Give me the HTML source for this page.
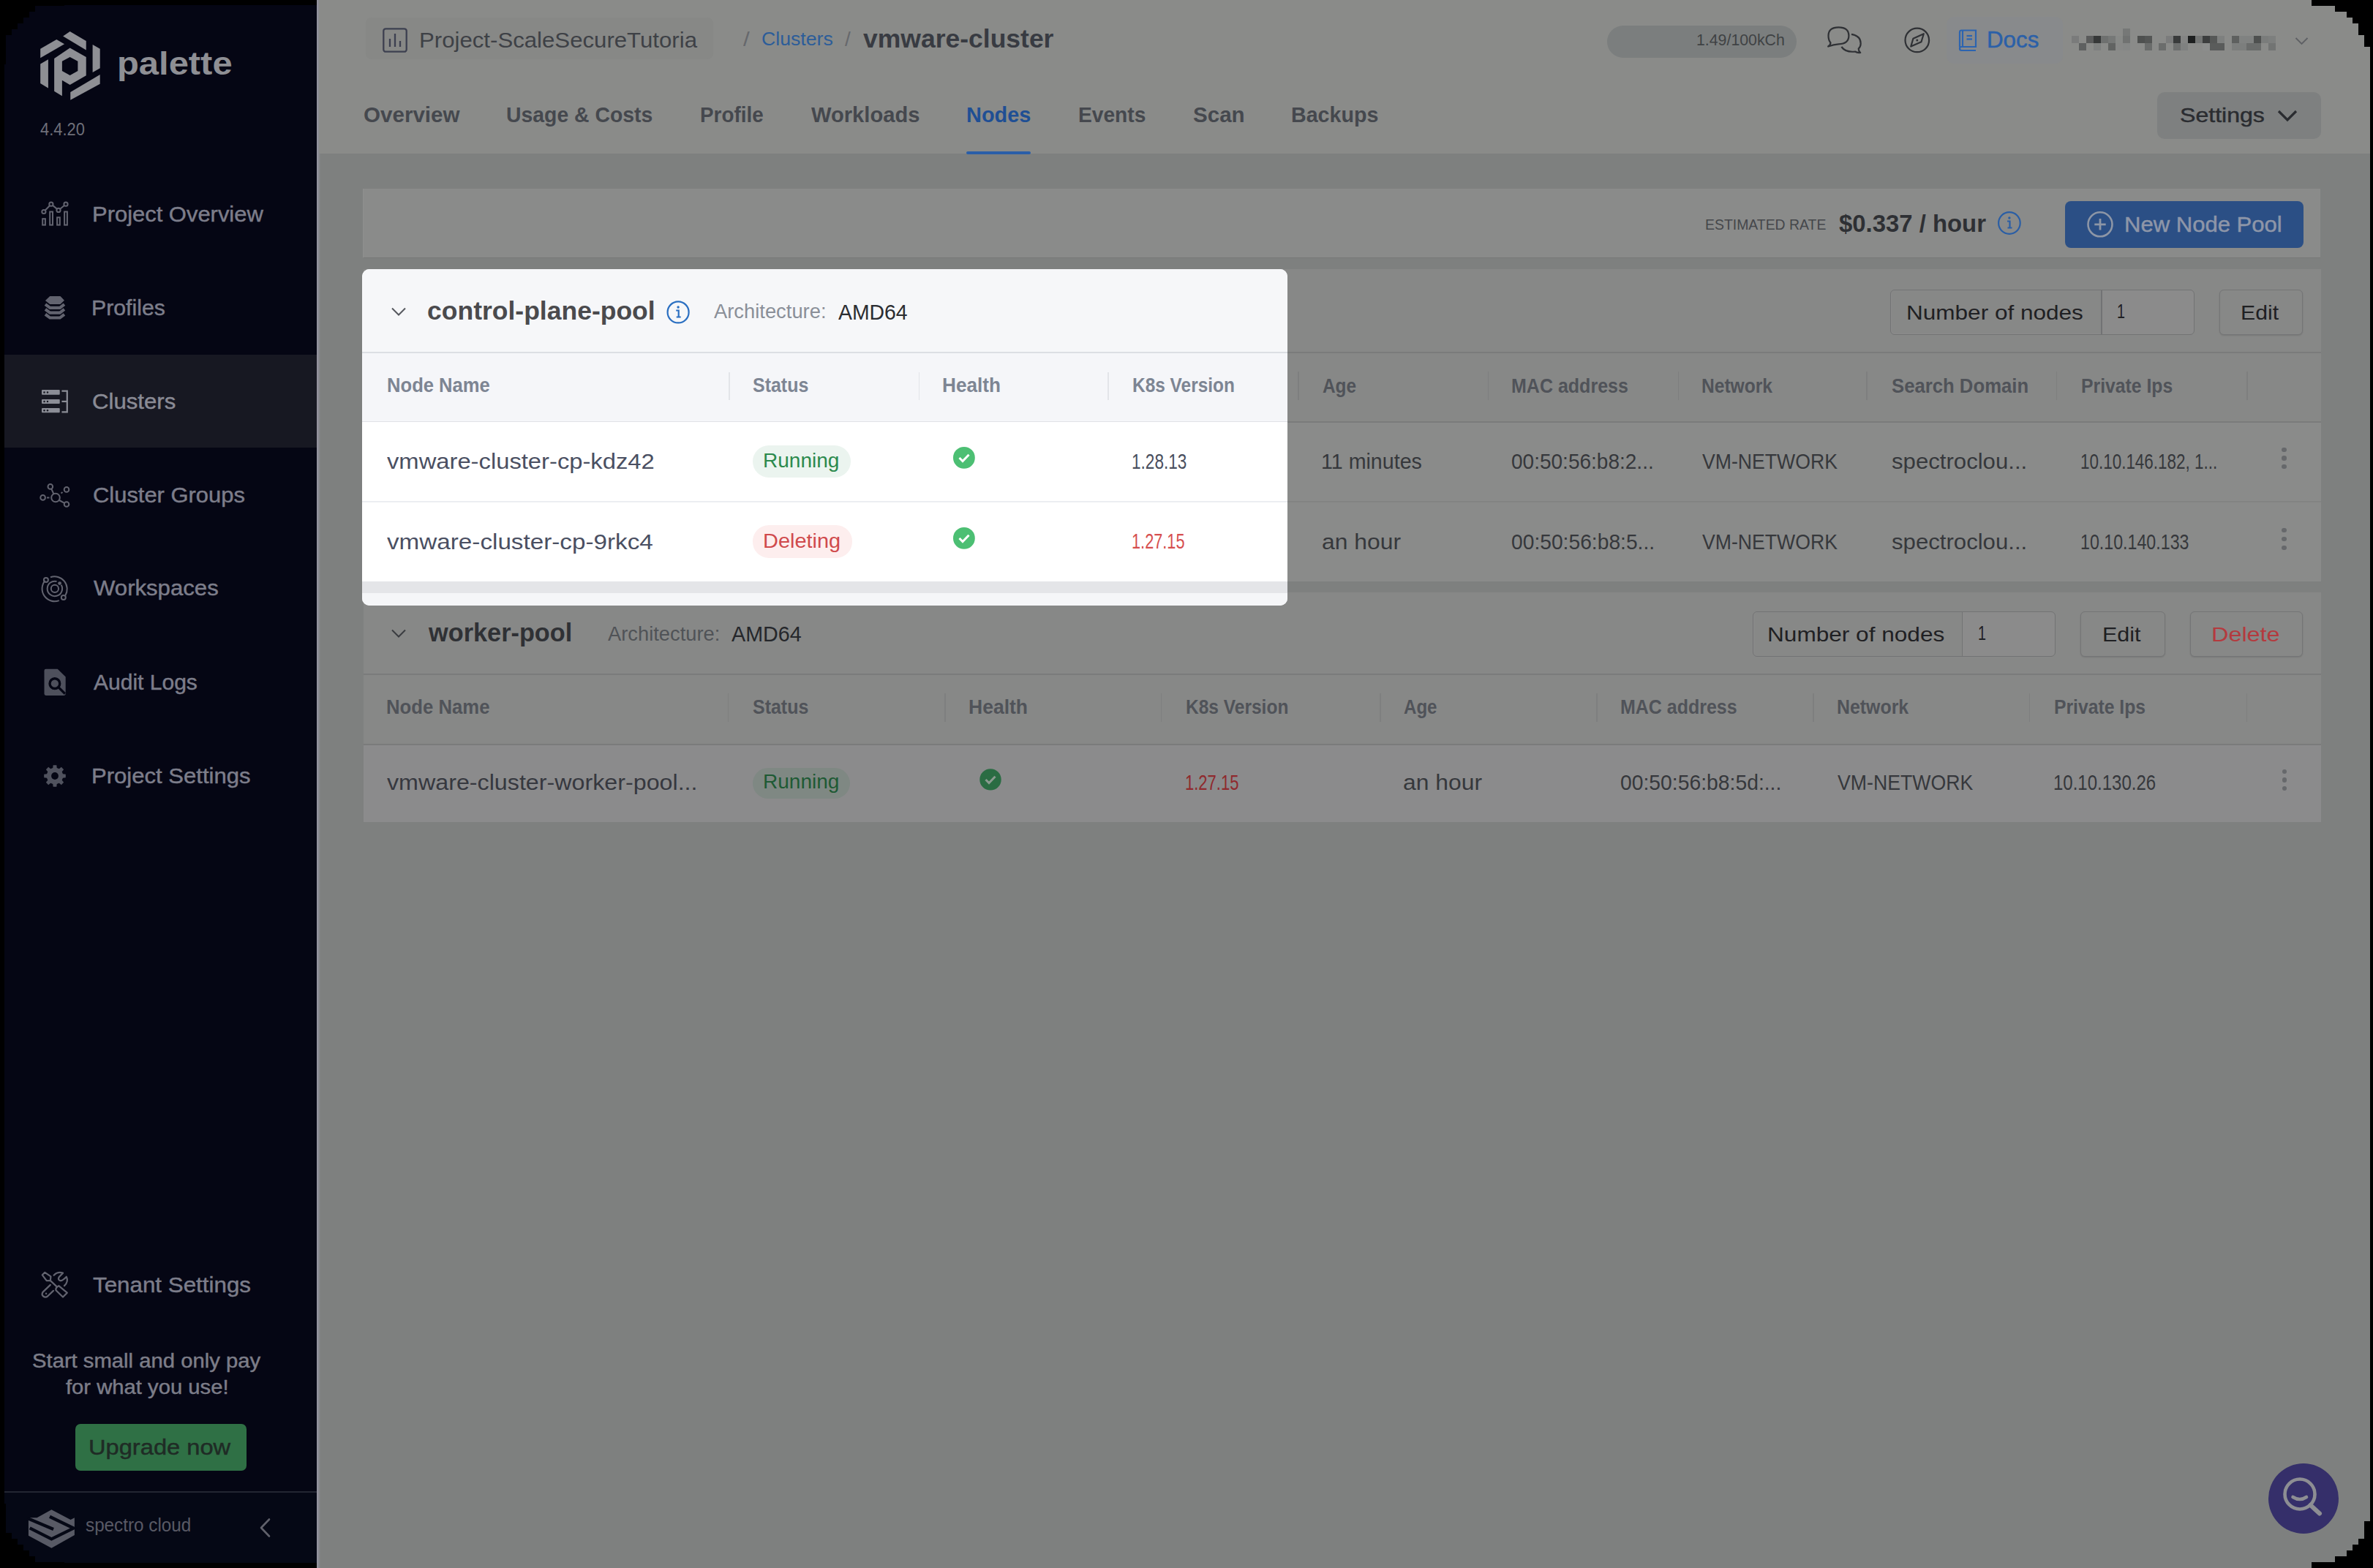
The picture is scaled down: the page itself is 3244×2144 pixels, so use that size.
<!DOCTYPE html>
<html><head><meta charset="utf-8"><style>
html,body{margin:0;padding:0;}
body{width:3244px;height:2144px;position:relative;overflow:hidden;background:#000;font-family:'Liberation Sans', sans-serif;}
span{white-space:nowrap;transform-origin:0 0;display:block;}
#side{position:absolute;left:6px;top:7px;width:427px;height:2130px;background:#050614;overflow:hidden;}
#main{position:absolute;left:433px;top:0;width:2807px;height:2144px;background:#7e807f;overflow:hidden;}
</style></head><body>
<div id="side">
<div style="position:absolute;left:-6px;top:-7px;width:3244px;height:2144px;">
<svg style="position:absolute;left:40px;top:30px;" width="300" height="120" viewBox="0 0 2373 949"><g fill="#8e8f94"><polygon points="120,290 295,190 380,240 120,390"/><polygon points="365,155 440,103 615,205 615,305"/><polygon points="685,245 765,290 765,500 685,545"/><polygon points="445,760 765,570 765,670 445,845"/><polygon points="120,455 205,405 205,715 120,665"/><path fill-rule="evenodd" d="M270,395 L440,280 L615,380 L615,580 L440,680 L355,630 L355,800 L270,750 Z M355,425 L440,380 L525,425 L525,530 L440,578 L355,530 Z"/></g></svg>
<span style="position:absolute;left:160.43px;top:63.91px;font-size:45px;line-height:45px;font-weight:bold;color:#8e8f94;transform:scaleX(1.0865);">palette</span>
<span style="position:absolute;left:54.70px;top:166.03px;font-size:23px;line-height:23px;font-weight:normal;color:#6e6f79;transform:scaleX(0.9516);">4.4.20</span>
<div style="position:absolute;left:0px;top:485px;width:433px;height:127px;background:#171822;"></div>
<span style="position:absolute;left:126.30px;top:277.93px;font-size:29.5px;line-height:29.5px;font-weight:normal;color:#7c7d8a;-webkit-text-stroke:0.45px #7c7d8a;transform:scaleX(1.0485);">Project Overview</span>
<span style="position:absolute;left:125.35px;top:405.83px;font-size:29.5px;line-height:29.5px;font-weight:normal;color:#7c7d8a;-webkit-text-stroke:0.45px #7c7d8a;transform:scaleX(1.0249);">Profiles</span>
<span style="position:absolute;left:126.34px;top:534.03px;font-size:29.5px;line-height:29.5px;font-weight:normal;color:#8a8b95;-webkit-text-stroke:0.45px #8a8b95;transform:scaleX(1.0560);">Clusters</span>
<span style="position:absolute;left:126.55px;top:662.03px;font-size:29.5px;line-height:29.5px;font-weight:normal;color:#7c7d8a;-webkit-text-stroke:0.45px #7c7d8a;transform:scaleX(1.0477);">Cluster Groups</span>
<span style="position:absolute;left:127.60px;top:789.43px;font-size:29.5px;line-height:29.5px;font-weight:normal;color:#7c7d8a;-webkit-text-stroke:0.45px #7c7d8a;transform:scaleX(1.0552);">Workspaces</span>
<span style="position:absolute;left:127.60px;top:918.03px;font-size:29.5px;line-height:29.5px;font-weight:normal;color:#7c7d8a;-webkit-text-stroke:0.45px #7c7d8a;transform:scaleX(1.0176);">Audit Logs</span>
<span style="position:absolute;left:125.49px;top:1045.63px;font-size:29.5px;line-height:29.5px;font-weight:normal;color:#7c7d8a;-webkit-text-stroke:0.45px #7c7d8a;transform:scaleX(1.0527);">Project Settings</span>
<span style="position:absolute;left:127.40px;top:1742.43px;font-size:29.5px;line-height:29.5px;font-weight:normal;color:#7c7d8a;-webkit-text-stroke:0.45px #7c7d8a;transform:scaleX(1.0621);">Tenant Settings</span>
<svg style="position:absolute;left:50px;top:270px;" width="50" height="50" viewBox="0 0 50 50"><g fill="none" stroke="#62636f" stroke-width="2"><polyline points="9.9,19.5 19.9,9.2 30,17.4 40,9.2"/><circle cx="9.9" cy="19.5" r="2.6" fill="#050614"/><circle cx="19.9" cy="9.2" r="2.6" fill="#050614"/><circle cx="30" cy="17.4" r="2.6" fill="#050614"/><circle cx="40" cy="9.2" r="2.6" fill="#050614"/><rect x="8.2" y="29.2" width="3.7" height="8.4"/><rect x="18.2" y="19.5" width="3.8" height="18.1"/><rect x="28.1" y="27.3" width="3.7" height="10.3"/><rect x="38.1" y="19.5" width="3.8" height="18.1"/></g></svg>
<svg style="position:absolute;left:50px;top:395px;" width="50" height="50" viewBox="0 0 1568 1568"><g fill="#62636f"><polygon points="375,500 570,315 1020,315 1190,490 1020,655 570,655"/></g><g fill="none" stroke="#62636f" stroke-width="130" stroke-linejoin="miter"><polyline points="375,660 575,810 1000,810 1190,660"/><polyline points="375,875 575,1025 1000,1025 1190,875"/><polyline points="375,1090 575,1240 1000,1240 1190,1090"/></g></svg>
<svg style="position:absolute;left:50px;top:525px;" width="50" height="50" viewBox="0 0 1568 1568"><g fill="#8b8d96"><rect x="220" y="250" width="775" height="215" rx="30"/><rect x="220" y="655" width="775" height="190" rx="30"/><rect x="220" y="1035" width="775" height="195" rx="30"/></g><g fill="#171822"><circle cx="330" cy="360" r="38"/><circle cx="470" cy="360" r="38"/><circle cx="330" cy="750" r="38"/><circle cx="470" cy="750" r="38"/><circle cx="330" cy="1135" r="38"/><circle cx="470" cy="1135" r="38"/></g><g fill="none" stroke="#8b8d96" stroke-width="70"><polyline points="1080,300 1310,300 1310,1200 1080,1200"/><line x1="1080" y1="750" x2="1310" y2="750"/></g></svg>
<svg style="position:absolute;left:50px;top:652px;" width="50" height="50" viewBox="0 0 50 50"><g fill="none" stroke="#62636f" stroke-width="2"><circle cx="26" cy="28.5" r="5.8"/><circle cx="18.8" cy="13.4" r="3.3"/><circle cx="41" cy="17.4" r="3.3"/><circle cx="8.6" cy="28.4" r="3.3"/><circle cx="41" cy="37.5" r="3.3"/><line x1="20.3" y1="16.5" x2="23.4" y2="23.3"/><line x1="14" y1="28.5" x2="17.5" y2="28.5"/><line x1="33.5" y1="22.5" x2="35.5" y2="21"/><line x1="31" y1="32" x2="38" y2="35.8"/></g></svg>
<svg style="position:absolute;left:50px;top:780px;" width="50" height="50" viewBox="0 0 50 50"><g fill="none" stroke="#62636f" stroke-width="2"><path d="M19,9.2 A17.2,17.2 0 0 1 39.3,34.3"/><path d="M30.8,41.1 A17.2,17.2 0 0 1 11.7,13.8"/><path d="M33.7,19.8 A10.2,10.2 0 1 1 27.5,15.05"/><circle cx="24.9" cy="24.9" r="5.1"/><circle cx="12.9" cy="13.1" r="3"/><circle cx="36.8" cy="37" r="3"/></g><circle cx="31.6" cy="17.6" r="2.4" fill="#62636f"/></svg>
<svg style="position:absolute;left:50px;top:908px;" width="50" height="50" viewBox="0 0 1568 1568"><path fill="#4e505c" d="M400,215 L900,215 L1245,550 L1245,1280 Q1245,1345 1180,1345 L400,1345 Q330,1345 330,1280 L330,285 Q330,215 400,215 Z"/><g fill="none" stroke="#050614" stroke-width="105"><circle cx="780" cy="835" r="215"/><line x1="945" y1="1000" x2="1220" y2="1275"/></g></svg>
<svg style="position:absolute;left:50px;top:1036px;" width="50" height="50" viewBox="0 0 50 50"><polygon fill="#50525e" points="35.96,22.27 39.82,22.65 39.82,27.35 35.96,27.73 34.69,30.82 37.14,33.82 33.82,37.14 30.82,34.69 27.73,35.96 27.35,39.82 22.65,39.82 22.27,35.96 19.18,34.69 16.18,37.14 12.86,33.82 15.31,30.82 14.04,27.73 10.18,27.35 10.18,22.65 14.04,22.27 15.31,19.18 12.86,16.18 16.18,12.86 19.18,15.31 22.27,14.04 22.65,10.18 27.35,10.18 27.73,14.04 30.82,15.31 33.82,12.86 37.14,16.18 34.69,19.18"/><circle cx="25" cy="25" r="4.9" fill="#050614"/></svg>
<svg style="position:absolute;left:50px;top:1732px;" width="50" height="50" viewBox="0 0 1568 1568"><g fill="none" stroke="#62636f" stroke-width="70" stroke-linejoin="round" stroke-linecap="round"><path d="M355,245 L245,355 L430,600 L590,600 L610,420 Z"/><line x1="610" y1="615" x2="870" y2="860"/><path d="M590,780 L265,1095 Q200,1210 290,1270 Q380,1340 470,1270 L720,1030"/><path d="M740,370 Q900,200 1130,270 L960,450 Q900,560 1020,600 Q1100,620 1280,430 Q1380,640 1190,820"/><path d="M950,820 L1310,1120 L1130,1300 L830,1010 Q800,900 950,820 Z"/></g><circle cx="410" cy="1150" r="38" fill="#62636f"/></svg>
<span style="position:absolute;left:43.62px;top:1848.44px;font-size:27px;line-height:27px;font-weight:normal;color:#7c7d88;-webkit-text-stroke:0.45px #7c7d88;transform:scaleX(1.0829);">Start small and only pay</span>
<span style="position:absolute;left:90.00px;top:1883.84px;font-size:27px;line-height:27px;font-weight:normal;color:#7c7d88;-webkit-text-stroke:0.45px #7c7d88;transform:scaleX(1.0823);">for what you use!</span>
<div style="position:absolute;left:103.3px;top:1947.2px;width:233.59999999999997px;height:63.700000000000045px;background:#2f7045;border-radius:7px;"></div>
<span style="position:absolute;left:120.79px;top:1963.83px;font-size:29.5px;line-height:29.5px;font-weight:normal;color:#1f2b25;-webkit-text-stroke:0.45px #1f2b25;transform:scaleX(1.1064);">Upgrade now</span>
<div style="position:absolute;left:0px;top:2039px;width:433px;height:1.5px;background:#232632;"></div>
<div style="position:absolute;left:0px;top:2040.5px;width:433px;height:103.5px;background:#050815;"></div>
<svg style="position:absolute;left:30px;top:2055px;" width="80" height="70" viewBox="0 0 1792 1568"><path fill="#585a65" d="M200,455 L460,455 L905,205 L1490,515 L1610,455 L1610,985 L905,1385 L200,1000 Z"/><g fill="none" stroke="#050815" stroke-width="95" stroke-linejoin="miter"><polyline points="170,470 965,805"/><polyline points="850,420 1580,775 905,1105 240,770"/></g></svg>
<span style="position:absolute;left:116.60px;top:2072.84px;font-size:25px;line-height:25px;font-weight:normal;color:#595a65;transform:scaleX(0.9703);">spectro cloud</span>
<svg style="position:absolute;left:350px;top:2072px;" width="25" height="35" viewBox="0 0 25 35"><polyline points="18,5.5 7,17 18,28.5" fill="none" stroke="#60616b" stroke-width="2.6" stroke-linecap="round" stroke-linejoin="round"/></svg>
</div></div>
<div id="main">
<div style="position:absolute;left:-433px;top:0;width:3244px;height:2144px;">
<div style="position:absolute;left:433px;top:0px;width:5px;height:2144px;background:linear-gradient(90deg,#9796a2 0px,#8e8e98 2px,#7e807f 5px);"></div>
<div style="position:absolute;left:436px;top:0px;width:2804px;height:210px;background:#8a8b89;"></div>
<div style="position:absolute;left:500px;top:24px;width:475px;height:57px;background:#878886;border-radius:8px;"></div>
<svg style="position:absolute;left:520px;top:35px;" width="40" height="40" viewBox="0 0 40 40"><g fill="none" stroke="#3d4050" stroke-width="2.3"><rect x="4.3" y="4.3" width="31.4" height="31.4" rx="3"/><line x1="13" y1="18" x2="13" y2="29"/><line x1="20" y1="11" x2="20" y2="29"/><line x1="27" y1="21" x2="27" y2="29"/></g></svg>
<span style="position:absolute;left:572.89px;top:39.73px;font-size:29.5px;line-height:29.5px;font-weight:normal;color:#3e4146;transform:scaleX(1.0566);">Project-ScaleSecureTutoria</span>
<span style="position:absolute;left:1016.00px;top:40.30px;font-size:28px;line-height:28px;font-weight:normal;color:#66686c;transform:scaleX(1.1250);">/</span>
<span style="position:absolute;left:1040.95px;top:41.41px;font-size:25.5px;line-height:25.5px;font-weight:normal;color:#2c5d99;transform:scaleX(1.0461);">Clusters</span>
<span style="position:absolute;left:1155.00px;top:40.30px;font-size:28px;line-height:28px;font-weight:normal;color:#66686c;transform:scaleX(1.0000);">/</span>
<span style="position:absolute;left:1180.00px;top:35.70px;font-size:34.5px;line-height:34.5px;font-weight:bold;color:#383b42;transform:scaleX(1.0289);">vmware-cluster</span>
<div style="position:absolute;left:2197px;top:35px;width:259px;height:44px;background:#7b7e7e;border-radius:22px;"></div>
<span style="position:absolute;left:2319.31px;top:44.80px;font-size:21.5px;line-height:21.5px;font-weight:normal;color:#3f4244;transform:scaleX(0.9911);">1.49/100kCh</span>
<svg style="position:absolute;left:2490px;top:30px;" width="60" height="50" viewBox="0 0 60 50"><g fill="none" stroke="#2f3135" stroke-width="2.2" stroke-linejoin="round"><path d="M12.5,28.5 Q9.5,25 9.5,18.8 Q9.5,7.3 23.4,7.3 Q37.4,7.3 37.4,18.8 Q37.4,30 23.4,30.3 Q17,30.5 9.2,33.5 Q12.5,31 12.5,28.5 Z"/><path d="M41,16.8 Q53.7,19 53.7,29.4 Q53.7,33.5 50.7,36.5 Q50.7,40 53.2,42 Q49,42.5 46,40.5 Q33,42 27.4,34"/></g></svg>
<svg style="position:absolute;left:2600px;top:34px;" width="42" height="42" viewBox="0 0 42 42"><circle cx="20.8" cy="20.9" r="16.3" fill="none" stroke="#2f3135" stroke-width="2.2"/><polygon points="29.8,12.2 26.5,23.2 12.3,29.5 15.4,18.7" fill="none" stroke="#2f3135" stroke-width="2.2" stroke-linejoin="round"/><circle cx="20.8" cy="20.9" r="1.5" fill="#2f3135"/></svg>
<div style="position:absolute;left:2661px;top:23px;width:159px;height:64px;background:#888a8c;border-radius:10px;"></div>
<svg style="position:absolute;left:2674px;top:38px;" width="32" height="34" viewBox="0 0 32 34"><g fill="none" stroke="#2c64b0" stroke-width="2.2"><path d="M5,26.5 L5,6 Q5,3.5 7.5,3.5 L27,3.5 L27,26 L7.5,26 Q5,26 5,28.5 Q5,31 7.5,31 L27,31"/><line x1="9" y1="3.5" x2="9" y2="26"/><line x1="14.5" y1="11" x2="22" y2="11"/><line x1="14.5" y1="15.5" x2="22" y2="15.5"/></g></svg>
<span style="position:absolute;left:2715.95px;top:39.18px;font-size:30.5px;line-height:30.5px;font-weight:normal;color:#2b60a8;-webkit-text-stroke:0.45px #2b60a8;transform:scaleX(1.0262);">Docs</span>
<div style="position:absolute;left:2901.65px;top:39.00px;width:10px;height:10px;background:#767877;"></div><div style="position:absolute;left:2832.00px;top:48.90px;width:10px;height:10px;background:#7a7b7b;"></div><div style="position:absolute;left:2851.90px;top:48.90px;width:10px;height:10px;background:#5a5b5b;"></div><div style="position:absolute;left:2861.85px;top:48.90px;width:10px;height:10px;background:#363838;"></div><div style="position:absolute;left:2871.80px;top:48.90px;width:10px;height:10px;background:#6e706f;"></div><div style="position:absolute;left:2881.75px;top:48.90px;width:10px;height:10px;background:#767877;"></div><div style="position:absolute;left:2891.70px;top:48.90px;width:10px;height:10px;background:#878987;"></div><div style="position:absolute;left:2901.65px;top:48.90px;width:10px;height:10px;background:#707271;"></div><div style="position:absolute;left:2921.55px;top:48.90px;width:10px;height:10px;background:#4e504f;"></div><div style="position:absolute;left:2931.50px;top:48.90px;width:10px;height:10px;background:#545655;"></div><div style="position:absolute;left:2961.35px;top:48.90px;width:10px;height:10px;background:#7b7c7c;"></div><div style="position:absolute;left:2971.30px;top:48.90px;width:10px;height:10px;background:#393b3b;"></div><div style="position:absolute;left:2981.25px;top:48.90px;width:10px;height:10px;background:#848584;"></div><div style="position:absolute;left:2991.20px;top:48.90px;width:10px;height:10px;background:#1d1f1f;"></div><div style="position:absolute;left:3001.15px;top:48.90px;width:10px;height:10px;background:#737574;"></div><div style="position:absolute;left:3011.10px;top:48.90px;width:10px;height:10px;background:#3c3e3e;"></div><div style="position:absolute;left:3021.05px;top:48.90px;width:10px;height:10px;background:#565857;"></div><div style="position:absolute;left:3031.00px;top:48.90px;width:10px;height:10px;background:#7e807f;"></div><div style="position:absolute;left:3050.90px;top:48.90px;width:10px;height:10px;background:#5e605f;"></div><div style="position:absolute;left:3060.85px;top:48.90px;width:10px;height:10px;background:#808281;"></div><div style="position:absolute;left:3070.80px;top:48.90px;width:10px;height:10px;background:#808281;"></div><div style="position:absolute;left:3080.75px;top:48.90px;width:10px;height:10px;background:#4e504f;"></div><div style="position:absolute;left:3090.70px;top:48.90px;width:10px;height:10px;background:#7a7c7b;"></div><div style="position:absolute;left:3100.65px;top:48.90px;width:10px;height:10px;background:#7d7f7e;"></div><div style="position:absolute;left:2841.95px;top:58.80px;width:10px;height:10px;background:#5e6060;"></div><div style="position:absolute;left:2861.85px;top:58.80px;width:10px;height:10px;background:#7f8180;"></div><div style="position:absolute;left:2881.75px;top:58.80px;width:10px;height:10px;background:#616362;"></div><div style="position:absolute;left:2891.70px;top:58.80px;width:10px;height:10px;background:#878887;"></div><div style="position:absolute;left:2901.65px;top:58.80px;width:10px;height:10px;background:#858786;"></div><div style="position:absolute;left:2931.50px;top:58.80px;width:10px;height:10px;background:#6a6c6b;"></div><div style="position:absolute;left:2951.40px;top:58.80px;width:10px;height:10px;background:#6b6d6c;"></div><div style="position:absolute;left:2971.30px;top:58.80px;width:10px;height:10px;background:#6d6f6e;"></div><div style="position:absolute;left:2981.25px;top:58.80px;width:10px;height:10px;background:#7f8180;"></div><div style="position:absolute;left:3011.10px;top:58.80px;width:10px;height:10px;background:#8c8e8d;"></div><div style="position:absolute;left:3021.05px;top:58.80px;width:10px;height:10px;background:#5a5c5b;"></div><div style="position:absolute;left:3031.00px;top:58.80px;width:10px;height:10px;background:#5a5c5b;"></div><div style="position:absolute;left:3050.90px;top:58.80px;width:10px;height:10px;background:#7c7e7d;"></div><div style="position:absolute;left:3060.85px;top:58.80px;width:10px;height:10px;background:#7c7e7d;"></div><div style="position:absolute;left:3070.80px;top:58.80px;width:10px;height:10px;background:#6a6c6b;"></div><div style="position:absolute;left:3080.75px;top:58.80px;width:10px;height:10px;background:#6a6c6b;"></div><div style="position:absolute;left:3100.65px;top:58.80px;width:10px;height:10px;background:#727473;"></div>
<svg style="position:absolute;left:3134px;top:48px;" width="24" height="16" viewBox="0 0 24 16"><polyline points="4.5,4 12.5,12 20.5,4" fill="none" stroke="#5e6064" stroke-width="1.8"/></svg>
<span style="position:absolute;left:496.60px;top:141.93px;font-size:29.5px;line-height:29.5px;font-weight:bold;color:#45484e;transform:scaleX(1.0027);">Overview</span>
<span style="position:absolute;left:692.04px;top:141.93px;font-size:29.5px;line-height:29.5px;font-weight:bold;color:#45484e;transform:scaleX(0.9623);">Usage &amp; Costs</span>
<span style="position:absolute;left:956.76px;top:141.93px;font-size:29.5px;line-height:29.5px;font-weight:bold;color:#45484e;transform:scaleX(0.9437);">Profile</span>
<span style="position:absolute;left:1109.00px;top:141.93px;font-size:29.5px;line-height:29.5px;font-weight:bold;color:#45484e;transform:scaleX(0.9876);">Workloads</span>
<span style="position:absolute;left:1321.02px;top:141.93px;font-size:29.5px;line-height:29.5px;font-weight:bold;color:#1f4f94;transform:scaleX(0.9803);">Nodes</span>
<span style="position:absolute;left:1474.05px;top:141.93px;font-size:29.5px;line-height:29.5px;font-weight:bold;color:#45484e;transform:scaleX(0.9546);">Events</span>
<span style="position:absolute;left:1631.00px;top:141.93px;font-size:29.5px;line-height:29.5px;font-weight:bold;color:#45484e;transform:scaleX(1.0016);">Scan</span>
<span style="position:absolute;left:1765.03px;top:141.93px;font-size:29.5px;line-height:29.5px;font-weight:bold;color:#45484e;transform:scaleX(0.9707);">Backups</span>
<div style="position:absolute;left:1321px;top:207px;width:88px;height:3.5px;background:#2a5ea8;border-radius:2px;"></div>
<div style="position:absolute;left:2949px;top:125.5px;width:223.5px;height:64.5px;background:#7e8080;border-radius:10px;"></div>
<span style="position:absolute;left:2979.87px;top:142.87px;font-size:28.5px;line-height:28.5px;font-weight:normal;color:#2a2c30;-webkit-text-stroke:0.45px #2a2c30;transform:scaleX(1.1255);">Settings</span>
<svg style="position:absolute;left:3110px;top:145px;" width="34" height="28" viewBox="0 0 34 28"><polyline points="5,7 17,19 29,7" fill="none" stroke="#2a2c30" stroke-width="3.2"/></svg>
<div style="position:absolute;left:496.3px;top:257.6px;width:2676.2px;height:95.69999999999999px;background:#8a8b8a;border-left:1.5px solid #8e8f8e;border-bottom:1.5px solid #777877;box-sizing:border-box;"></div>
<span style="position:absolute;left:2330.68px;top:295.52px;font-size:21px;line-height:21px;font-weight:normal;color:#45474b;transform:scaleX(0.9242);letter-spacing:0px;">ESTIMATED RATE</span>
<span style="position:absolute;left:2514.00px;top:288.22px;font-size:34px;line-height:34px;font-weight:bold;color:#2e3034;transform:scaleX(0.9666);">$0.337 / hour</span>
<svg style="position:absolute;left:2728px;top:286px;" width="38" height="38" viewBox="0 0 38 38"><circle cx="18.9" cy="19" r="14.8" fill="none" stroke="#2a5ea5" stroke-width="2.2"/><circle cx="18.9" cy="12" r="1.7" fill="#2a5ea5"/><path d="M16,16.5 L19.5,16.5 L19.5,25.5 M16.5,25.5 L22.5,25.5" fill="none" stroke="#2a5ea5" stroke-width="2.2"/></svg>
<div style="position:absolute;left:2823px;top:275px;width:326px;height:64px;background:#2b4f85;border-radius:8px;"></div>
<svg style="position:absolute;left:2850px;top:286px;" width="42" height="42" viewBox="0 0 42 42"><circle cx="21" cy="20.8" r="16.5" fill="none" stroke="#8d96a6" stroke-width="2.6"/><path d="M21,13 L21,28.5 M13.3,20.8 L28.7,20.8" fill="none" stroke="#8d96a6" stroke-width="2.8"/></svg>
<span style="position:absolute;left:2903.89px;top:292.03px;font-size:29.5px;line-height:29.5px;font-weight:normal;color:#8e96a8;-webkit-text-stroke:0.45px #8e96a8;transform:scaleX(1.0525);">New Node Pool</span>
<div style="position:absolute;left:497px;top:368px;width:2676px;height:427px;background:#8a8b8a;"></div>
<div style="position:absolute;left:497px;top:368px;width:2676px;height:113px;background:#878887;"></div>
<div style="position:absolute;left:497px;top:481px;width:2676px;height:1.5px;background:#7a7b7b;"></div>
<div style="position:absolute;left:497px;top:482.5px;width:2676px;height:93.5px;background:#878887;"></div>
<div style="position:absolute;left:497px;top:576px;width:2676px;height:1.5px;background:#7a7b7b;"></div>
<div style="position:absolute;left:497px;top:685px;width:2676px;height:1.5px;background:#828382;"></div>
<div style="position:absolute;left:996px;top:508px;width:1.5px;height:39px;background:#7e7f7f;"></div>
<div style="position:absolute;left:1255.6px;top:508px;width:1.5px;height:39px;background:#7e7f7f;"></div>
<div style="position:absolute;left:1514px;top:508px;width:1.5px;height:39px;background:#7e7f7f;"></div>
<div style="position:absolute;left:1774px;top:508px;width:1.5px;height:39px;background:#7e7f7f;"></div>
<div style="position:absolute;left:2033.8px;top:508px;width:1.5px;height:39px;background:#7e7f7f;"></div>
<div style="position:absolute;left:2293.7px;top:508px;width:1.5px;height:39px;background:#7e7f7f;"></div>
<div style="position:absolute;left:2551px;top:508px;width:1.5px;height:39px;background:#7e7f7f;"></div>
<div style="position:absolute;left:2810.8px;top:508px;width:1.5px;height:39px;background:#7e7f7f;"></div>
<div style="position:absolute;left:3071px;top:508px;width:1.5px;height:39px;background:#7e7f7f;"></div>
<span style="position:absolute;left:1808.00px;top:514.74px;font-size:27px;line-height:27px;font-weight:bold;color:#505359;transform:scaleX(0.9021);">Age</span>
<span style="position:absolute;left:2066.07px;top:514.74px;font-size:27px;line-height:27px;font-weight:bold;color:#505359;transform:scaleX(0.9265);">MAC address</span>
<span style="position:absolute;left:2326.09px;top:514.74px;font-size:27px;line-height:27px;font-weight:bold;color:#505359;transform:scaleX(0.9107);">Network</span>
<span style="position:absolute;left:2586.00px;top:514.74px;font-size:27px;line-height:27px;font-weight:bold;color:#505359;transform:scaleX(0.9519);">Search Domain</span>
<span style="position:absolute;left:2844.68px;top:514.74px;font-size:27px;line-height:27px;font-weight:bold;color:#505359;transform:scaleX(0.9171);">Private Ips</span>
<span style="position:absolute;left:1806.09px;top:616.11px;font-size:30px;line-height:30px;font-weight:normal;color:#36383c;transform:scaleX(0.9539);">11 minutes</span>
<span style="position:absolute;left:2066.07px;top:616.11px;font-size:30px;line-height:30px;font-weight:normal;color:#36383c;transform:scaleX(0.9339);">00:50:56:b8:2...</span>
<span style="position:absolute;left:2327.00px;top:616.11px;font-size:30px;line-height:30px;font-weight:normal;color:#36383c;transform:scaleX(0.8881);">VM-NETWORK</span>
<span style="position:absolute;left:2586.00px;top:616.11px;font-size:30px;line-height:30px;font-weight:normal;color:#36383c;transform:scaleX(1.0381);">spectroclou...</span>
<span style="position:absolute;left:2844.10px;top:616.11px;font-size:30px;line-height:30px;font-weight:normal;color:#36383c;transform:scaleX(0.7479);">10.10.146.182, 1...</span>
<span style="position:absolute;left:1806.94px;top:725.81px;font-size:30px;line-height:30px;font-weight:normal;color:#36383c;transform:scaleX(1.0620);">an hour</span>
<span style="position:absolute;left:2066.06px;top:725.81px;font-size:30px;line-height:30px;font-weight:normal;color:#36383c;transform:scaleX(0.9407);">00:50:56:b8:5...</span>
<span style="position:absolute;left:2327.00px;top:725.81px;font-size:30px;line-height:30px;font-weight:normal;color:#36383c;transform:scaleX(0.8881);">VM-NETWORK</span>
<span style="position:absolute;left:2586.00px;top:725.81px;font-size:30px;line-height:30px;font-weight:normal;color:#36383c;transform:scaleX(1.0381);">spectroclou...</span>
<span style="position:absolute;left:2844.05px;top:725.81px;font-size:30px;line-height:30px;font-weight:normal;color:#36383c;transform:scaleX(0.7739);">10.10.140.133</span>
<div style="position:absolute;left:3119.3999999999996px;top:611.7px;width:6.6px;height:6.6px;border-radius:50%;background:#66686b;"></div>
<div style="position:absolute;left:3119.3999999999996px;top:623.4000000000001px;width:6.6px;height:6.6px;border-radius:50%;background:#66686b;"></div>
<div style="position:absolute;left:3119.3999999999996px;top:634.7px;width:6.6px;height:6.6px;border-radius:50%;background:#66686b;"></div>
<div style="position:absolute;left:3119.3999999999996px;top:721.7px;width:6.6px;height:6.6px;border-radius:50%;background:#66686b;"></div>
<div style="position:absolute;left:3119.3999999999996px;top:733.7px;width:6.6px;height:6.6px;border-radius:50%;background:#66686b;"></div>
<div style="position:absolute;left:3119.3999999999996px;top:745.7px;width:6.6px;height:6.6px;border-radius:50%;background:#66686b;"></div>
<div style="position:absolute;left:2584px;top:395.5px;width:416.4000000000001px;height:62.30000000000001px;background:#8b8b8b;border:1.5px solid #727374;border-radius:6px;box-sizing:border-box;"></div>
<div style="position:absolute;left:2585.5px;top:397.0px;width:286.5px;height:59.30000000000001px;background:#878887;border-radius:5px 0 0 5px;"></div>
<div style="position:absolute;left:2872px;top:395.5px;width:1.5px;height:62.30000000000001px;background:#727374;"></div>
<span style="position:absolute;left:2605.79px;top:412.87px;font-size:28.5px;line-height:28.5px;font-weight:normal;color:#1f2023;transform:scaleX(1.1064);">Number of nodes</span>
<span style="position:absolute;left:2893.62px;top:410.87px;font-size:28.5px;line-height:28.5px;font-weight:normal;color:#1f2023;transform:scaleX(0.6923);">1</span>
<div style="position:absolute;left:3033.8px;top:395.5px;width:113.79999999999973px;height:62.30000000000001px;background:#878887;border:1.5px solid #747576;border-radius:6px;box-sizing:border-box;box-shadow:0 1px 2px rgba(0,0,0,0.12);"></div>
<span style="position:absolute;left:3062.88px;top:412.87px;font-size:28.5px;line-height:28.5px;font-weight:normal;color:#1f2023;transform:scaleX(1.0595);">Edit</span>
<div style="position:absolute;left:497px;top:810px;width:2676px;height:314.29999999999995px;background:#878887;"></div>
<div style="position:absolute;left:497px;top:921px;width:2676px;height:1.5px;background:#7a7b7b;"></div>
<div style="position:absolute;left:497px;top:1017px;width:2676px;height:1.5px;background:#7a7b7b;"></div>
<div style="position:absolute;left:497px;top:1018.5px;width:2676px;height:105.79999999999995px;background:#8b8b8c;"></div>
<svg style="position:absolute;left:530px;top:855px;" width="30" height="25" viewBox="0 0 30 25"><polyline points="6,6.5 15,15.5 24,6.5" fill="none" stroke="#3a3c40" stroke-width="2"/></svg>
<span style="position:absolute;left:585.99px;top:848.30px;font-size:34.5px;line-height:34.5px;font-weight:bold;color:#2f3135;transform:scaleX(0.9942);">worker-pool</span>
<span style="position:absolute;left:830.60px;top:853.64px;font-size:27px;line-height:27px;font-weight:normal;color:#505357;transform:scaleX(1.0116);">Architecture:</span>
<span style="position:absolute;left:1000.00px;top:852.11px;font-size:30px;line-height:30px;font-weight:normal;color:#25272b;transform:scaleX(0.9562);">AMD64</span>
<div style="position:absolute;left:2396px;top:835.5px;width:414px;height:62.5px;background:#8b8b8b;border:1.5px solid #727374;border-radius:6px;box-sizing:border-box;"></div>
<div style="position:absolute;left:2397.5px;top:837.0px;width:284.1999999999998px;height:59.5px;background:#878887;border-radius:5px 0 0 5px;"></div>
<div style="position:absolute;left:2681.7px;top:835.5px;width:1.5px;height:62.5px;background:#727374;"></div>
<span style="position:absolute;left:2416.48px;top:853.37px;font-size:28.5px;line-height:28.5px;font-weight:normal;color:#1f2023;transform:scaleX(1.1083);">Number of nodes</span>
<span style="position:absolute;left:2703.62px;top:851.37px;font-size:28.5px;line-height:28.5px;font-weight:normal;color:#1f2023;transform:scaleX(0.6923);">1</span>
<div style="position:absolute;left:2844.4px;top:836px;width:115.29999999999973px;height:62px;background:#878887;border:1.5px solid #747576;border-radius:6px;box-sizing:border-box;box-shadow:0 1px 2px rgba(0,0,0,0.12);"></div>
<span style="position:absolute;left:2874.36px;top:853.37px;font-size:28.5px;line-height:28.5px;font-weight:normal;color:#1f2023;transform:scaleX(1.0701);">Edit</span>
<div style="position:absolute;left:2994px;top:836px;width:153.5px;height:62px;background:#878887;border:1.5px solid #747576;border-radius:6px;box-sizing:border-box;box-shadow:0 1px 2px rgba(0,0,0,0.12);"></div>
<span style="position:absolute;left:3022.73px;top:853.37px;font-size:28.5px;line-height:28.5px;font-weight:normal;color:#b43a3e;transform:scaleX(1.1366);">Delete</span>
<div style="position:absolute;left:994.8px;top:948px;width:1.5px;height:39px;background:#7e7f7f;"></div>
<div style="position:absolute;left:1291px;top:948px;width:1.5px;height:39px;background:#7e7f7f;"></div>
<div style="position:absolute;left:1586.5px;top:948px;width:1.5px;height:39px;background:#7e7f7f;"></div>
<div style="position:absolute;left:1886px;top:948px;width:1.5px;height:39px;background:#7e7f7f;"></div>
<div style="position:absolute;left:2182px;top:948px;width:1.5px;height:39px;background:#7e7f7f;"></div>
<div style="position:absolute;left:2478px;top:948px;width:1.5px;height:39px;background:#7e7f7f;"></div>
<div style="position:absolute;left:2773.8px;top:948px;width:1.5px;height:39px;background:#7e7f7f;"></div>
<div style="position:absolute;left:3070.7px;top:948px;width:1.5px;height:39px;background:#7e7f7f;"></div>
<span style="position:absolute;left:528.05px;top:954.14px;font-size:27px;line-height:27px;font-weight:bold;color:#505359;transform:scaleX(0.9524);">Node Name</span>
<span style="position:absolute;left:1029.00px;top:954.14px;font-size:27px;line-height:27px;font-weight:bold;color:#505359;transform:scaleX(0.9252);">Status</span>
<span style="position:absolute;left:1323.82px;top:954.14px;font-size:27px;line-height:27px;font-weight:bold;color:#505359;transform:scaleX(0.9822);">Health</span>
<span style="position:absolute;left:1620.99px;top:954.14px;font-size:27px;line-height:27px;font-weight:bold;color:#505359;transform:scaleX(0.9080);">K8s Version</span>
<span style="position:absolute;left:1919.30px;top:954.14px;font-size:27px;line-height:27px;font-weight:bold;color:#505359;transform:scaleX(0.8923);">Age</span>
<span style="position:absolute;left:2214.87px;top:954.14px;font-size:27px;line-height:27px;font-weight:bold;color:#505359;transform:scaleX(0.9253);">MAC address</span>
<span style="position:absolute;left:2510.88px;top:954.14px;font-size:27px;line-height:27px;font-weight:bold;color:#505359;transform:scaleX(0.9220);">Network</span>
<span style="position:absolute;left:2808.08px;top:954.14px;font-size:27px;line-height:27px;font-weight:bold;color:#505359;transform:scaleX(0.9156);">Private Ips</span>
<span style="position:absolute;left:529.00px;top:1055.11px;font-size:30px;line-height:30px;font-weight:normal;color:#36383f;transform:scaleX(1.0745);">vmware-cluster-worker-pool...</span>
<div style="position:absolute;left:1029px;top:1049.5px;width:132.70000000000005px;height:42.09999999999991px;background:#7f8883;border-radius:21px;"></div>
<span style="position:absolute;left:1042.62px;top:1056.14px;font-size:27px;line-height:27px;font-weight:normal;color:#1e5a34;transform:scaleX(1.0383);">Running</span>
<svg style="position:absolute;left:1336px;top:1048px;" width="36" height="36" viewBox="0 0 36 36"><circle cx="18" cy="17.9" r="14.7" fill="#2a6c43"/><polyline points="11.5,18 16,22.5 24.5,13.8" fill="none" stroke="#8a9a90" stroke-width="3"/></svg>
<span style="position:absolute;left:1620.43px;top:1055.11px;font-size:30px;line-height:30px;font-weight:normal;color:#8f2a2e;transform:scaleX(0.7340);">1.27.15</span>
<span style="position:absolute;left:1917.94px;top:1055.11px;font-size:30px;line-height:30px;font-weight:normal;color:#36383c;transform:scaleX(1.0620);">an hour</span>
<span style="position:absolute;left:2214.86px;top:1055.11px;font-size:30px;line-height:30px;font-weight:normal;color:#36383c;transform:scaleX(0.9436);">00:50:56:b8:5d:...</span>
<span style="position:absolute;left:2511.80px;top:1055.11px;font-size:30px;line-height:30px;font-weight:normal;color:#36383c;transform:scaleX(0.8891);">VM-NETWORK</span>
<span style="position:absolute;left:2807.40px;top:1055.11px;font-size:30px;line-height:30px;font-weight:normal;color:#36383c;transform:scaleX(0.8001);">10.10.130.26</span>
<div style="position:absolute;left:3119.7px;top:1051.7px;width:6.6px;height:6.6px;border-radius:50%;background:#66686b;"></div>
<div style="position:absolute;left:3119.7px;top:1063.3px;width:6.6px;height:6.6px;border-radius:50%;background:#66686b;"></div>
<div style="position:absolute;left:3119.7px;top:1074.7px;width:6.6px;height:6.6px;border-radius:50%;background:#66686b;"></div>
<svg style="position:absolute;left:3095px;top:1995px;" width="108" height="108" viewBox="0 0 108 108"><circle cx="54" cy="54" r="48" fill="#352f6a"/><g fill="none" stroke="#8d8e93" stroke-width="4.6" stroke-linecap="round"><circle cx="49" cy="48" r="20.5"/><line x1="63.5" y1="63" x2="76" y2="74.5" stroke-width="6"/><path d="M39.5,52 Q49,58 58,52"/></g></svg>
<div style="position:absolute;left:494.5px;top:368px;width:1265.5px;height:460px;border-radius:10px;overflow:hidden;background:#ffffff;"><div style="position:absolute;left:0;top:0;width:100%;height:113.5px;background:#f6f7f9;"></div><div style="position:absolute;left:0;top:113px;width:100%;height:1.6px;background:#dcdfe4;"></div><div style="position:absolute;left:0;top:114.6px;width:100%;height:93px;background:#f5f6f9;"></div><div style="position:absolute;left:0;top:207.5px;width:100%;height:1.5px;background:#e0e2e6;"></div><div style="position:absolute;left:0;top:317px;width:100%;height:1.5px;background:#eceef1;"></div><div style="position:absolute;left:0;top:427px;width:100%;height:16px;background:#e4e5e8;"></div><div style="position:absolute;left:0;top:443px;width:100%;height:17px;background:#f5f6f8;"></div></div>
<svg style="position:absolute;left:530px;top:415px;" width="30" height="25" viewBox="0 0 30 25"><polyline points="6,6.5 15,15.5 24,6.5" fill="none" stroke="#55585e" stroke-width="2"/></svg>
<span style="position:absolute;left:583.97px;top:407.60px;font-size:34.5px;line-height:34.5px;font-weight:bold;color:#4a4a4d;transform:scaleX(1.0293);">control-plane-pool</span>
<svg style="position:absolute;left:908px;top:408px;" width="38" height="38" viewBox="0 0 38 38"><circle cx="19.1" cy="18.9" r="14.5" fill="none" stroke="#2a6fc1" stroke-width="2.2"/><circle cx="19.1" cy="12" r="1.7" fill="#2a6fc1"/><path d="M16.2,16.5 L19.7,16.5 L19.7,25.5 M16.7,25.5 L22.7,25.5" fill="none" stroke="#2a6fc1" stroke-width="2.2"/></svg>
<span style="position:absolute;left:976.00px;top:413.14px;font-size:27px;line-height:27px;font-weight:normal;color:#8a8f98;transform:scaleX(1.0129);">Architecture:</span>
<span style="position:absolute;left:1146.00px;top:412.21px;font-size:30px;line-height:30px;font-weight:normal;color:#2b2d31;transform:scaleX(0.9462);">AMD64</span>
<div style="position:absolute;left:996px;top:508.5px;width:1.5px;height:38.5px;background:#e3e5e9;"></div>
<div style="position:absolute;left:1255.6px;top:508.5px;width:1.5px;height:38.5px;background:#e3e5e9;"></div>
<div style="position:absolute;left:1514px;top:508.5px;width:1.5px;height:38.5px;background:#e3e5e9;"></div>
<span style="position:absolute;left:528.65px;top:514.44px;font-size:27px;line-height:27px;font-weight:bold;color:#7d8593;transform:scaleX(0.9483);">Node Name</span>
<span style="position:absolute;left:1029.00px;top:514.44px;font-size:27px;line-height:27px;font-weight:bold;color:#7d8593;transform:scaleX(0.9252);">Status</span>
<span style="position:absolute;left:1287.53px;top:514.44px;font-size:27px;line-height:27px;font-weight:bold;color:#7d8593;transform:scaleX(0.9685);">Health</span>
<span style="position:absolute;left:1547.50px;top:514.44px;font-size:27px;line-height:27px;font-weight:bold;color:#7d8593;transform:scaleX(0.9048);">K8s Version</span>
<span style="position:absolute;left:529.00px;top:615.61px;font-size:30px;line-height:30px;font-weight:normal;color:#4a4f62;transform:scaleX(1.0915);">vmware-cluster-cp-kdz42</span>
<div style="position:absolute;left:1029px;top:608.8px;width:133.70000000000005px;height:43.80000000000007px;background:#ebf4ef;border-radius:22px;"></div>
<span style="position:absolute;left:1042.62px;top:617.14px;font-size:27px;line-height:27px;font-weight:normal;color:#2b8a4d;transform:scaleX(1.0383);">Running</span>
<svg style="position:absolute;left:1300px;top:608px;" width="36" height="36" viewBox="0 0 36 36"><circle cx="17.9" cy="17.9" r="14.9" fill="#4cbf73"/><polyline points="11.5,18 16,22.5 24.5,13.8" fill="none" stroke="#ffffff" stroke-width="3"/></svg>
<span style="position:absolute;left:1546.89px;top:615.90px;font-size:30px;line-height:30px;font-weight:normal;color:#4a4f5e;transform:scaleX(0.7525);">1.28.13</span>
<span style="position:absolute;left:529.00px;top:725.81px;font-size:30px;line-height:30px;font-weight:normal;color:#4a4f62;transform:scaleX(1.1077);">vmware-cluster-cp-9rkc4</span>
<div style="position:absolute;left:1029px;top:718.3px;width:136px;height:44.60000000000002px;background:#fdeeee;border-radius:22px;"></div>
<span style="position:absolute;left:1042.56px;top:727.14px;font-size:27px;line-height:27px;font-weight:normal;color:#d04a4c;transform:scaleX(1.0714);">Deleting</span>
<svg style="position:absolute;left:1300px;top:718px;" width="36" height="36" viewBox="0 0 36 36"><circle cx="17.9" cy="17.9" r="14.9" fill="#4cbf73"/><polyline points="11.5,18 16,22.5 24.5,13.8" fill="none" stroke="#ffffff" stroke-width="3"/></svg>
<span style="position:absolute;left:1546.95px;top:725.40px;font-size:30px;line-height:30px;font-weight:normal;color:#d64f4f;transform:scaleX(0.7248);">1.27.15</span>
</div></div>
<svg style="position:absolute;left:0;top:0" width="3244" height="2144" viewBox="0 0 3244 2144"><g fill="#000"><rect x="3160" y="0" width="84" height="8"/><rect x="3192" y="8" width="52" height="8"/><rect x="3208" y="16" width="36" height="8"/><rect x="3216" y="24" width="28" height="8"/><rect x="3224" y="32" width="20" height="16"/><rect x="3232" y="48" width="12" height="16"/><rect x="3232" y="2080" width="12" height="24"/><rect x="3224" y="2104" width="20" height="8"/><rect x="3216" y="2112" width="28" height="8"/><rect x="3208" y="2120" width="36" height="8"/><rect x="3192" y="2128" width="52" height="8"/><rect x="3160" y="2136" width="84" height="8"/><rect x="0" y="0" width="88" height="8"/><rect x="0" y="8" width="48" height="8"/><rect x="0" y="16" width="40" height="8"/><rect x="0" y="24" width="32" height="8"/><rect x="0" y="32" width="24" height="8"/><rect x="0" y="40" width="16" height="8"/><rect x="0" y="48" width="8" height="40"/><rect x="0" y="2056" width="8" height="40"/><rect x="0" y="2096" width="16" height="8"/><rect x="0" y="2104" width="24" height="8"/><rect x="0" y="2112" width="32" height="8"/><rect x="0" y="2120" width="40" height="8"/><rect x="0" y="2128" width="48" height="8"/><rect x="0" y="2136" width="88" height="8"/></g></svg>
</body></html>
